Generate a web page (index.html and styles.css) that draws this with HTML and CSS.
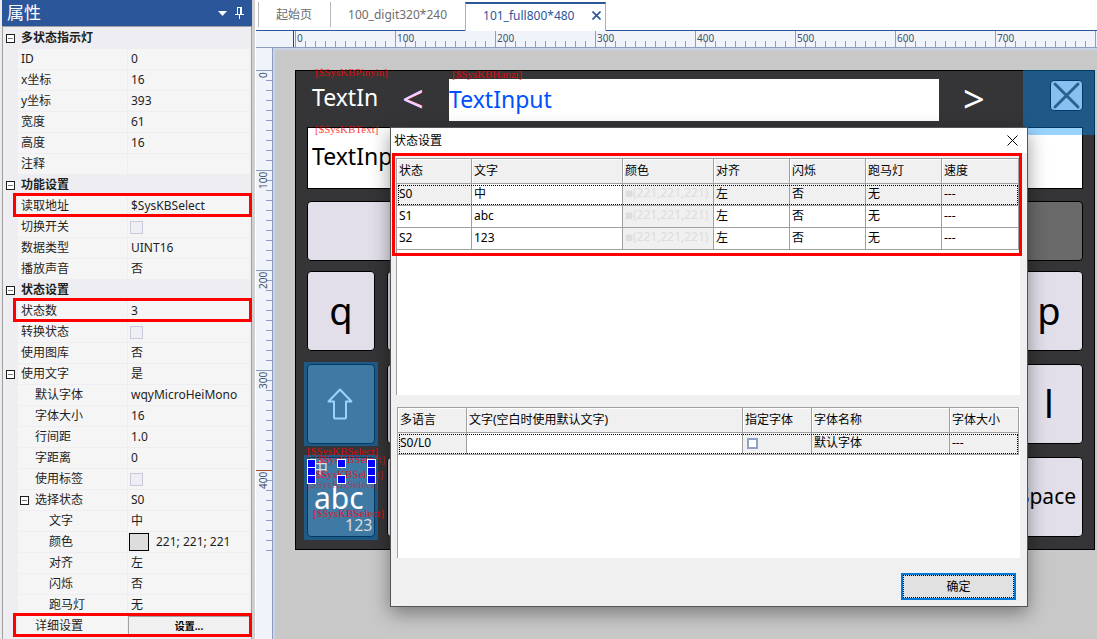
FILE: index.html
```html
<!DOCTYPE html>
<html lang="zh-CN">
<head>
<meta charset="UTF-8">
<meta name="viewport" content="width=device-width, initial-scale=1.0">
<title>101_full800*480</title>
<link rel="stylesheet" href="styles.css">
</head>
<body>
  <div class="app">
    <!-- 属性面板 -->
    <aside class="panel">
      <header class="panel-title">
        <h1>属性</h1>
        <button class="panel-btn" aria-label="菜单"><svg width="9" height="5" viewBox="0 0 9 5"><path d="M0 0h9L4.500 5z" fill="#fff"/></svg></button>
        <button class="panel-btn" aria-label="固定"><svg width="9" height="12" viewBox="0 0 9 12"><path d="M2.500 0v7M2 .5h5M5.500 0v7M6.500 0v7M0 7.500h9M4.500 7v5" fill="none" stroke="#fff"/></svg></button>
      </header>
      <div class="props">
        <div class="prop group"><button class="expander" aria-label="折叠"></button><span class="name">多状态指示灯</span></div>
        <div class="prop"><span class="name">ID</span><span class="value">0</span></div>
        <div class="prop"><span class="name">x坐标</span><span class="value">16</span></div>
        <div class="prop"><span class="name">y坐标</span><span class="value">393</span></div>
        <div class="prop"><span class="name">宽度</span><span class="value">61</span></div>
        <div class="prop"><span class="name">高度</span><span class="value">16</span></div>
        <div class="prop"><span class="name">注释</span><span class="value"></span></div>
        <div class="prop group"><button class="expander" aria-label="折叠"></button><span class="name">功能设置</span></div>
        <div class="prop marked"><span class="name">读取地址</span><span class="value">$SysKBSelect</span></div>
        <div class="prop"><label class="name" for="toggle">切换开关</label><span class="value"><input type="checkbox" id="toggle"></span></div>
        <div class="prop"><span class="name">数据类型</span><span class="value">UINT16</span></div>
        <div class="prop"><span class="name">播放声音</span><span class="value">否</span></div>
        <div class="prop group"><button class="expander" aria-label="折叠"></button><span class="name">状态设置</span></div>
        <div class="prop marked"><span class="name">状态数</span><span class="value">3</span></div>
        <div class="prop"><label class="name" for="convert">转换状态</label><span class="value"><input type="checkbox" id="convert"></span></div>
        <div class="prop"><span class="name">使用图库</span><span class="value">否</span></div>
        <div class="prop"><button class="expander" aria-label="折叠"></button><span class="name">使用文字</span><span class="value">是</span></div>
        <div class="prop level2"><span class="name">默认字体</span><span class="value">wqyMicroHeiMono</span></div>
        <div class="prop level2"><span class="name">字体大小</span><span class="value">16</span></div>
        <div class="prop level2"><span class="name">行间距</span><span class="value">1.0</span></div>
        <div class="prop level2"><span class="name">字距离</span><span class="value">0</span></div>
        <div class="prop level2"><label class="name" for="tag">使用标签</label><span class="value"><input type="checkbox" id="tag"></span></div>
        <div class="prop level2"><button class="expander" aria-label="折叠"></button><span class="name">选择状态</span><span class="value">S0</span></div>
        <div class="prop level3"><span class="name">文字</span><span class="value">中</span></div>
        <div class="prop level3"><span class="name">颜色</span><span class="value"><i class="swatch"></i>221; 221; 221</span></div>
        <div class="prop level3"><span class="name">对齐</span><span class="value">左</span></div>
        <div class="prop level3"><span class="name">闪烁</span><span class="value">否</span></div>
        <div class="prop level3"><span class="name">跑马灯</span><span class="value">无</span></div>
        <div class="prop level2 marked"><span class="name">详细设置</span><span class="value with-btn"><button class="set-btn">设置...</button></span></div>
      </div>
    </aside>

    <!-- 工作区 -->
    <main class="workspace">
      <nav class="tabs">
        <button class="tab">起始页</button>
        <button class="tab">100_digit320*240</button>
        <div class="tab active">
          <button class="tab-text">101_full800*480</button>
          <button class="tab-close" aria-label="关闭"><svg width="9" height="9" viewBox="0 0 9 9"><path d="M.5.500l8 8M8.500.500l-8 8" stroke="#2b579a" stroke-width="1.600"/></svg></button>
        </div>
      </nav>
      <div class="ruler-h">
        <div class="scale"><span>0</span><span>100</span><span>200</span><span>300</span><span>400</span><span>500</span><span>600</span><span>700</span></div>
      </div>
      <div class="stage">
        <div class="ruler-v">
          <div class="scale"><span>0</span><span>100</span><span>200</span><span>300</span><span>400</span></div>
        </div>
        <div class="canvas">
          <div class="screen">
            <span class="item small-text">TextIn</span>
            <span class="item prev">&lt;</span>
            <div class="item hanzi">TextInput</div>
            <span class="item next">&gt;</span>
            <div class="item close-key"><svg width="31" height="29" viewBox="0 0 31 29"><path d="M4 3l23 23M27 3L4 26" stroke="#444" stroke-width="3" stroke-linecap="round"/></svg></div>
            <div class="item text-box">TextInput</div>
            <div class="item keys row1"><div class="key wide"></div><div class="key dark"></div></div>
            <div class="item keys row2"><div class="key">q</div><div class="key wide"></div><div class="key">p</div></div>
            <div class="item keys row3"><div class="key dark"></div><div class="key wide"></div><div class="key">l</div></div>
            <div class="item keys row4"><div class="key dark"></div><div class="key wide"></div><div class="key space">Space</div></div>
            <svg class="item arrow" width="26" height="32" viewBox="0 0 26 32"><path d="M13 1.500L24.500 13.500H19v16q0 1-1 1h-10q-1 0-1-1v-16H1.500z" fill="none" stroke="#fff" stroke-width="2" stroke-linejoin="round"/></svg>
            <span class="item state-zh">中</span>
            <span class="item state-abc">abc</span>
            <span class="item state-num">123</span>
            <div class="item overlay ov-close"></div>
            <div class="item overlay ov-shift"></div>
            <div class="item overlay ov-mode"></div>
            <!-- 变量标签 -->
            <span class="item var v1">[$SysKBPinyin]</span>
            <span class="item var v2">[$SysKBHanzi]</span>
            <span class="item var v3">[$SysKBText]</span>
            <span class="item var v4">[$SysKBSelect]</span>
            <span class="item var v5">[$SysKBSelect]</span>
            <span class="item var v6">[$SysKBSelect]</span>
            <span class="item var v7">[$SysKBSelect]</span>
            <span class="item var v8">[$SysKBSelect]</span>
            <!-- 选中框 -->
            <div class="item handles">
              <i></i><i></i><i></i>
              <i></i><b></b><i></i>
              <i></i><i></i><i></i>
            </div>
          </div>
        </div>
      </div>
    </main>

    <!-- 状态设置对话框 -->
    <section class="dialog" role="dialog" aria-labelledby="dialog-title">
      <header class="dialog-title">
        <h2 id="dialog-title">状态设置</h2>
        <button class="dialog-close" aria-label="关闭"><svg width="11" height="11" viewBox="0 0 11 11"><path d="M.5.500l10 10M10.500.500l-10 10" stroke="#000"/></svg></button>
      </header>
      <div class="dialog-body">
        <div class="list states">
          <table>
            <colgroup><col class="c75"><col class="c151"><col class="c91"><col class="c76"><col class="c76"><col class="c76"><col></colgroup>
            <tr><th>状态</th><th>文字</th><th>颜色</th><th>对齐</th><th>闪烁</th><th>跑马灯</th><th>速度</th></tr>
            <tr class="current"><td>S0</td><td class="edit">中</td><td class="rgb"><span>■</span>(221,221,221)</td><td>左</td><td>否</td><td>无</td><td>---</td></tr>
            <tr><td>S1</td><td>abc</td><td class="rgb"><span>■</span>(221,221,221)</td><td>左</td><td>否</td><td>无</td><td>---</td></tr>
            <tr><td>S2</td><td>123</td><td class="rgb"><span>■</span>(221,221,221)</td><td>左</td><td>否</td><td>无</td><td>---</td></tr>
          </table>
        </div>
        <div class="list langs">
          <table>
            <colgroup><col class="c69"><col><col class="c69"><col class="c138"><col class="c69"></colgroup>
            <tr><th>多语言</th><th>文字(空白时使用默认文字)</th><th>指定字体</th><th>字体名称</th><th>字体大小</th></tr>
            <tr class="current"><td>S0/L0</td><td class="edit"></td><td><input type="checkbox" aria-label="指定字体"></td><td>默认字体</td><td>---</td></tr>
          </table>
        </div>
        <div class="actions"><button class="ok">确定</button></div>
      </div>
    </section>
  </div>
</body>
</html>
```
FILE: styles.css
```css
* {
  box-sizing: border-box;
}
body {
  margin: 0;
  font-family: "Noto Sans", "Noto Sans CJK SC", sans-serif;
  font-size: 12px;
  line-height: 20px;
  color: #1e1e1e;
  background: #fff;
}
button {
  margin: 0;
  padding: 0;
  border: 0;
  background: none;
  font: inherit;
  color: inherit;
}
h1, h2 {
  margin: 0;
  font-weight: normal;
}
svg {
  display: block;
}
.app {
  position: relative;
  display: flex;
  height: 100vh;
  overflow: hidden;
}

/* 属性面板 */
.panel {
  flex: none;
  width: 256px;
  padding: 0 4px 0 2px;
  background: linear-gradient(to right, #ececec 2px, #d0d0d0 2px, #d0d0d0 255px, #fff 255px);
}
.panel-title {
  display: flex;
  align-items: center;
  gap: 8px;
  height: 26px;
  padding: 0 8px 0 5px;
  background: #2b579a;
  color: #fff;
}
.panel-title h1 {
  flex: 1;
  font-size: 17px;
  line-height: 24px;
}
.props {
  height: 100%;
  padding-top: 1px;
  border: 1px solid #a0a0a0;
  background: #eeeef2;
}
.prop {
  position: relative;
  display: flex;
  height: 21px;
  padding-left: 15px;
  padding-right: 1px;
}
.name,
.value {
  height: 20px;
  background: #f5f5f5;
}
.name {
  flex: none;
  width: 109px;
  padding-left: 3px;
}
.value {
  display: flex;
  align-items: center;
  flex: 1;
  margin-left: 1px;
  padding-left: 3px;
}
.group .name {
  width: auto;
  background: none;
  font-weight: bold;
}
.level2 .name {
  padding-left: 17px;
}
.level3 .name {
  padding-left: 31px;
}
.expander {
  position: absolute;
  left: 3px;
  top: 6px;
  width: 9px;
  height: 9px;
  border: 1px solid #1e1e1e;
  background: linear-gradient(#777, #777) center / 5px 1px no-repeat #fff;
}
.level2 .expander {
  left: 17px;
}
.prop input {
  appearance: none;
  width: 13px;
  height: 13px;
  margin: 0 0 0 -1px;
  border: 1px solid #ccc9dd;
  background: #eeeef5;
}
.swatch {
  width: 20px;
  height: 18px;
  margin: 0 7px 0 -2px;
  border: 1px solid #000;
  background: #ddd;
}
.with-btn {
  padding: 0;
}
.set-btn {
  width: 100%;
  height: 20px;
  border: 1px solid #a0a0a0;
  background: #f0f0f0;
  font-size: 10px;
  font-weight: bold;
  line-height: 18px;
  color: #000;
}
/* 红色标注框 */
.marked {
  z-index: 1;
}
.marked::after,
.states::after {
  content: "";
  position: absolute;
  border: 3px solid #f00;
  pointer-events: none;
}
.marked::after {
  inset: -3px -1px 0 10px;
}

/* 标签页 */
.workspace {
  flex: 1;
  min-width: 0;
  display: flex;
  flex-direction: column;
}
.tabs {
  display: flex;
  height: 31px;
  padding-left: 2px;
  border-bottom: 1px solid #2b579a;
  color: #6d6d6d;
}
.tab {
  height: 25px;
  margin-top: 2px;
  padding: 0 18px 0 17px;
  border-left: 1px solid #b8b8b8;
}
.tab.active {
  display: flex;
  align-items: center;
  gap: 18px;
  height: 29px;
  padding: 0 4px 4px 17px;
  border: 1px solid #a8b0bc;
  border-top: 2px solid #2b579a;
  border-bottom: 0;
  background: #fff;
  box-shadow: 0 1px #fff;
  color: #2b579a;
}

/* 标尺 */
.ruler-h {
  flex: none;
  height: 17px;
  padding-left: 39px;
  border-bottom: 1px solid #8c9dbf;
  background: linear-gradient(#d00, #d00) 37px 0 / 1px 100% no-repeat #f0f3fa;
}
.scale {
  color: #44546a;
  font-size: 10px;
  line-height: 14px;
}
.ruler-h .scale {
  display: flex;
  width: 801px;
  height: 16px;
  background:
    linear-gradient(to right, #8c9dbf 1px, transparent 1px) 0 0 / 100px 100%,
    linear-gradient(to right, #8c9dbf 1px, transparent 1px) 0 100% / 10px 6px repeat-x;
}
.ruler-h .scale span {
  width: 100px;
  padding-left: 2px;
}
.stage {
  flex: 1;
  min-height: 0;
  display: flex;
}
.ruler-v {
  flex: none;
  width: 17px;
  padding-top: 22px;
  border-right: 1px solid #8c9dbf;
  background: #f0f3fa;
}
.ruler-v .scale {
  height: 481px;
  background:
    linear-gradient(#a0522d, #a0522d) 0 400px / 100% 1px no-repeat,
    linear-gradient(#8c9dbf 1px, transparent 1px) 0 0 / 100% 100px,
    linear-gradient(#8c9dbf 1px, transparent 1px) 100% 0 / 6px 10px repeat-y;
}
.ruler-v .scale span {
  display: block;
  width: 14px;
  height: 100px;
  padding-bottom: 2px;
  writing-mode: vertical-rl;
  transform: rotate(180deg);
  text-align: right;
}
.ruler-v .scale span:last-child {
  height: 80px;
}
.canvas {
  flex: 1;
  min-width: 0;
  padding: 20px;
  border: 2px solid #c9d3e6;
  border-right: 0;
  border-bottom: 0;
  background: #c8c8c8;
}

/* 画布上的键盘 */
.screen {
  position: relative;
  width: 800px;
  height: 480px;
  background: #353537;
  box-shadow: inset 0 0 0 1px #000;
}
.item {
  position: absolute;
}
.small-text,
.hanzi,
.text-box {
  font-size: 23px;
  line-height: 40px;
}
.small-text {
  left: 17px;
  top: 7px;
  color: #fff;
}
.prev,
.next {
  top: 9px;
  font-size: 38px;
  line-height: 38px;
  color: #fff;
}
.prev {
  left: 107px;
  color: #fcf;
}
.next {
  left: 668px;
}
.hanzi {
  left: 154px;
  top: 9px;
  width: 490px;
  height: 42px;
  background: #fff;
  color: #0050ff;
}
.close-key {
  left: 755px;
  top: 10px;
  border: 1px solid #000;
  border-radius: 4px;
  background: #e2dfea;
}
.text-box {
  left: 12px;
  top: 57px;
  width: 776px;
  height: 62px;
  padding-left: 4px;
  border: 1px solid #000;
  background: #fff;
  color: #000;
  line-height: 56px;
}
.keys {
  display: flex;
  gap: 12px;
  left: 12px;
  width: 776px;
  height: 80px;
}
.row1 {
  top: 131px;
  height: 60px;
}
.row2 {
  top: 201px;
}
.row3 {
  top: 294px;
}
.row4 {
  top: 387px;
}
.key {
  width: 68px;
  border: 1px solid #000;
  border-radius: 4px;
  background: #e2dfea;
  color: #000;
  font-size: 38px;
  line-height: 76px;
  text-align: center;
}
.key.wide {
  flex: 1;
}
.key.dark {
  background: #6a6a6a;
}
.key.space {
  width: 72px;
  font-size: 21px;
}
.arrow {
  left: 32px;
  top: 318px;
}
.state-zh,
.state-num {
  font-size: 16px;
  color: #ddd;
}
.state-zh {
  left: 17px;
  top: 388px;
}
.state-abc {
  left: 19px;
  top: 408px;
  font-size: 30px;
  line-height: 40px;
  color: #fff;
}
.state-num {
  left: 50px;
  top: 445px;
}
.overlay {
  background: rgba(0, 148, 255, 0.4);
}
.ov-close {
  left: 728px;
  top: 0;
  width: 72px;
  height: 65px;
}
.ov-shift {
  left: 9px;
  top: 292px;
  width: 74px;
  height: 84px;
}
.ov-mode {
  left: 9px;
  top: 385px;
  width: 74px;
  height: 85px;
}
.state-abc,
.state-num,
.state-zh {
  z-index: 1;
}
.var {
  z-index: 2;
  font-family: "Liberation Serif", serif;
  font-size: 11px;
  line-height: 12px;
  color: rgba(255, 0, 0, 0.8);
}
.v1 { left: 20px; top: -4px; }
.v2 { left: 157px; top: -2px; }
.v3 { left: 20px; top: 53px; }
.v4 { left: 12px; top: 375px; }
.v5 { left: 19px; top: 383px; }
.v6 { left: 17px; top: 398px; }
.v7 { left: 12px; top: 408px; opacity: 0.5; }
.v8 { left: 18px; top: 437px; }
.handles {
  z-index: 3;
  left: 12px;
  top: 389px;
  display: grid;
  grid-template-columns: repeat(3, 9px);
  grid-template-rows: repeat(3, 8px);
  gap: 0 21px;
}
.handles i {
  height: 9px;
  border: 1px solid #fff;
  background: #00f;
}

/* 对话框 */
.dialog {
  position: absolute;
  left: 390px;
  top: 127px;
  z-index: 5;
  width: 638px;
  border: 1px solid #555;
  background: #f0f0f0;
  box-shadow: 0 6px 18px rgba(0, 0, 0, 0.4);
  color: #000;
}
.dialog-title {
  display: flex;
  align-items: center;
  justify-content: space-between;
  height: 25px;
  padding: 0 9px 0 3px;
  background: #fff;
}
.dialog-title h2 {
  font-size: 12px;
}
.dialog-body {
  padding: 5px 7px 6px 5px;
}
.list {
  position: relative;
  border-left: 1px solid #a0a0a0;
  background: #fff;
}
.states {
  height: 237px;
}
.langs {
  height: 151px;
  margin: 12px 0 0 1px;
}
.states::after {
  inset: -5px -2px auto -5px;
  height: 97px;
}
table {
  width: 100%;
  border-collapse: collapse;
  table-layout: fixed;
  margin-left: -1px;
}
th,
td {
  height: 22px;
  padding: 0 2px;
  border: 1px solid #a0a0a0;
  font-weight: normal;
  line-height: 18px;
  text-align: left;
  white-space: nowrap;
}
th {
  height: 25px;
  background: #f0f0f0;
  box-shadow: inset 1px 1px #fff;
}
td {
  padding-bottom: 2px;
}
.current {
  outline: 1px dotted #000;
  outline-offset: -2px;
}
.current td,
td.rgb {
  background: #f0f0f0;
}
.current td.edit {
  background: #fff;
}
td.rgb {
  color: #ddd;
}
td.rgb span {
  font-size: 8px;
}
td input {
  appearance: none;
  display: block;
  width: 11px;
  height: 11px;
  margin: 2px 0 0 2px;
  border: 2px solid #8fa3c8;
  background: #fff;
}
.c69 { width: 69px; }
.c75 { width: 75px; }
.c76 { width: 76px; }
.c91 { width: 91px; }
.c138 { width: 138px; }
.c151 { width: 151px; }
.actions {
  display: flex;
  justify-content: flex-end;
  padding: 15px 4px 0 0;
}
.ok {
  width: 115px;
  height: 27px;
  border: 2px solid #0078d7;
  outline: 1px dotted #000;
  outline-offset: -3px;
  background: #e1e1e1;
}
```
